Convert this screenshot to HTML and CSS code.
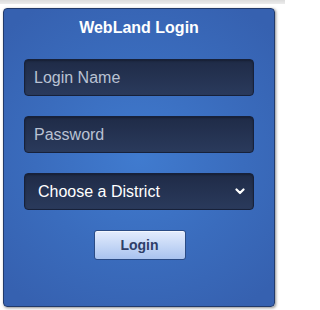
FILE: index.html
```html
<!DOCTYPE html>
<html>
<head>
<meta charset="utf-8">
<link rel="stylesheet" href="styles.css">
</head>
<body>
<div class="topbar"></div>
<div class="panel">
  <h1 class="title">WebLand Login</h1>
  <div class="field"><input class="input" type="text" placeholder="Login Name"></div>
  <div class="field"><input class="input" type="password" placeholder="Password"></div>
  <div class="field select-wrap">
    <div class="select">
      <span class="select-text">Choose a District</span>
      <svg class="chev" width="10" height="7" viewBox="0 0 10 7"><path d="M1.5 1.5 L5 5 L8.5 1.5" fill="none" stroke="#fff" stroke-width="2.2" stroke-linecap="round" stroke-linejoin="round"/></svg>
    </div>
  </div>
  <div class="actions"><button class="btn">Login</button></div>
</div>
</body>
</html>
```

FILE: styles.css
```css
html, body {
  margin: 0;
  padding: 0;
  background: #ffffff;
  width: 285px;
  height: 310px;
  overflow: hidden;
  font-family: "Liberation Sans", Arial, sans-serif;
}
.topbar {
  height: 4px;
  background: linear-gradient(#dcdcdc, #ececec);
  margin-bottom: 4px;
}
.panel {
  box-sizing: border-box;
  margin-left: 3px;
  width: 272px;
  height: 299px;
  border: 1px solid #223a6a;
  border-radius: 4px;
  background: radial-gradient(ellipse 70% 60% at 50% 50%, #407bcf 0%, #3a6cbd 55%, #3661b0 100%);
  box-shadow: 1px 1px 3px rgba(0,0,0,0.45);
  padding: 9px 20px 0 20px;
}
.title {
  margin: 0;
  text-align: center;
  font-size: 16px;
  font-weight: bold;
  color: #ffffff;
  line-height: 20px;
  height: 20px;
}
.field {
  margin-top: 21px;
}
.field + .field {
  margin-top: 20px;
}
.input, .select {
  box-sizing: border-box;
  display: block;
  width: 230px;
  height: 37px;
  border: 1px solid #17213a;
  border-radius: 4px;
  background: linear-gradient(#1f2b47, #2a3a5c);
  box-shadow: inset 0 1px 2px rgba(0,0,0,0.3);
  font-family: "Liberation Sans", Arial, sans-serif;
  font-size: 16px;
  color: #ffffff;
  padding: 0 9px;
  outline: none;
}
.input::placeholder {
  color: #b9c2d3;
  opacity: 1;
}
.select {
  display: flex;
  align-items: center;
  justify-content: space-between;
  padding: 0 8px 0 13px;
}
.select-text {
  color: #ffffff;
  font-size: 16px;
}
.chev {
  display: block;
}
.actions {
  display: flex;
  justify-content: center;
  margin-top: 20px;
}
.btn {
  box-sizing: border-box;
  width: 92px;
  height: 30px;
  border: 1px solid #2a4b85;
  border-radius: 3px;
  background: linear-gradient(#e3ecfd, #a9c3ef);
  box-shadow: inset 0 1px 0 rgba(255,255,255,0.6);
  font-family: "Liberation Sans", Arial, sans-serif;
  font-weight: bold;
  font-size: 14px;
  color: #2e3e68;
  padding: 0;
  margin-left: 1px;
}
```
